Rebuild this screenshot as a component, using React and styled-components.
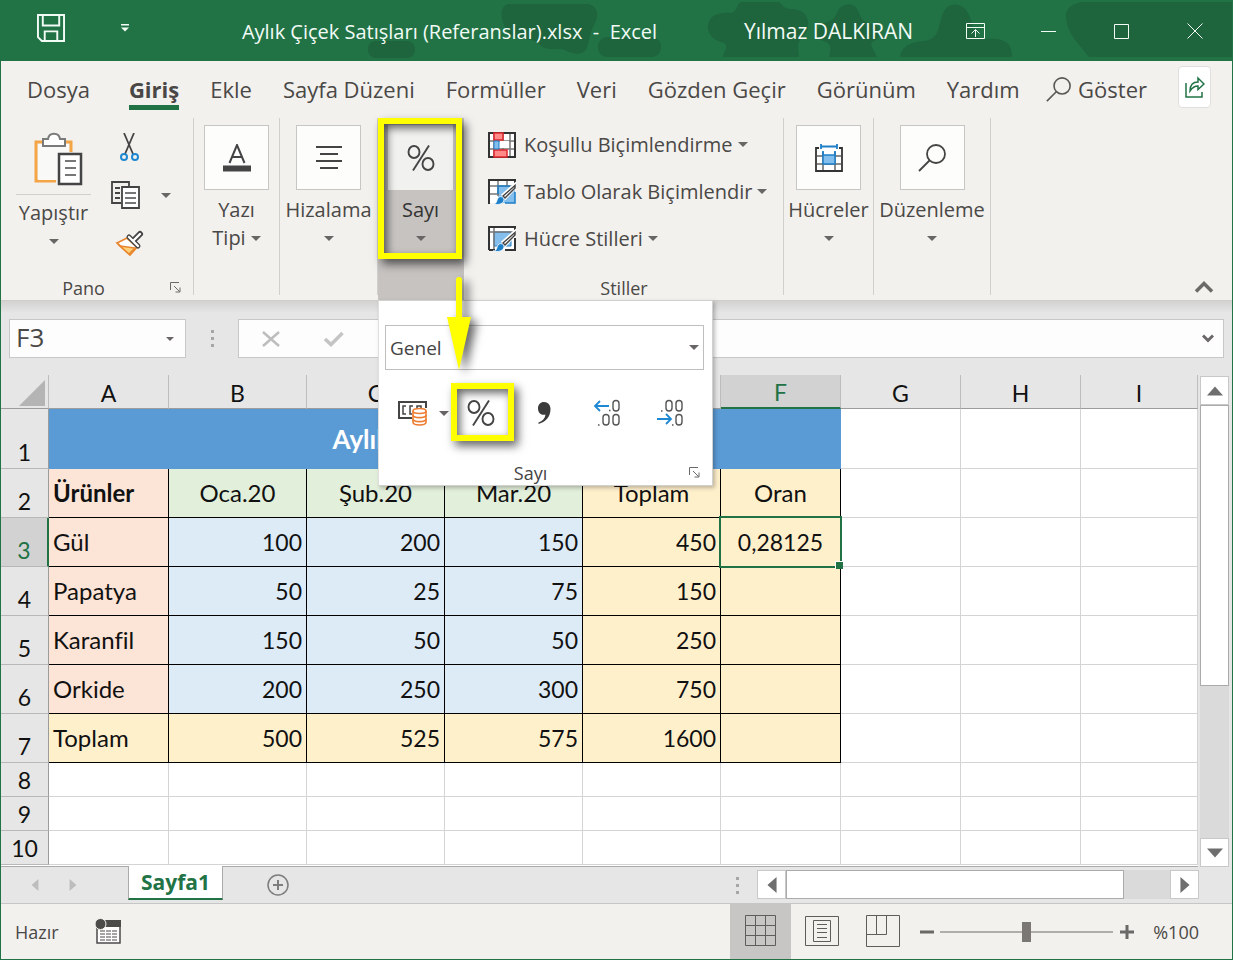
import React from 'react';
import styled, { createGlobalStyle, css } from 'styled-components';

const GREEN = '#217346';
const INK = '#444444';

const GlobalStyle = createGlobalStyle`
  *, *::before, *::after {
    box-sizing: border-box;
  }
  body {
    margin: 0;
    font-family: 'Open Sans', 'Noto Sans', sans-serif;
    font-size: 20px;
    color: #4a4846;
  }
  button, input, select {
    font: inherit;
    color: inherit;
    margin: 0;
    padding: 0;
    border: 0;
    background: none;
    border-radius: 0;
    outline: none;
  }
  svg {
    display: block;
    flex: none;
  }
`;

const Window = styled.div`
  min-height: 100vh;
  display: flex;
  flex-direction: column;
  border: 1px solid ${GREEN};
  background: #f3f1ee;
  overflow: hidden;
`;

/* Title bar */

const TitleBar = styled.header`
  position: relative;
  height: 60px;
  display: flex;
  align-items: center;
  padding-right: 1px;
  background: ${GREEN};
  color: #f2fbf5;
`;

const TitleArt = styled.svg`
  position: absolute;
  right: 0;
  top: 0;
`;

const QuickAccess = styled.div`
  position: relative;
  display: flex;
  align-items: center;
  gap: 56px;
  width: 180px;
  padding: 0 0 6px 36px;
`;

const QuickButton = styled.button`
  display: flex;
  color: #f2fbf5;
`;

const DocumentTitle = styled.h1`
  position: relative;
  flex: 1;
  margin: 0;
  font-size: 20px;
  font-weight: 400;
  text-align: center;
  white-space: pre;
`;

const UserName = styled.button`
  position: relative;
  padding: 0 26px;
  font-size: 21px;
  white-space: nowrap;
`;

const WindowButton = styled.button`
  position: relative;
  width: 73px;
  height: 60px;
  display: flex;
  align-items: center;
  justify-content: center;
`;

/* Ribbon tabs */

const TabStrip = styled.div`
  height: 57px;
  display: flex;
  align-items: flex-start;
  justify-content: space-between;
  padding: 0 21px 0 26px;
`;

const Tabs = styled.nav`
  display: flex;
  gap: 31px;
`;

const TabTools = styled.div`
  display: flex;
  gap: 31px;
`;

const RibbonTab = styled.button`
  height: 49px;
  padding-top: 12px;
  font-size: 22px;
  line-height: 32px;
  white-space: nowrap;
  margin-right: ${(props) => (props.$file ? '8px' : '0')};
  border-bottom: 5px solid ${(props) => (props.$active ? GREEN : 'transparent')};
  font-weight: ${(props) => (props.$active ? 700 : 400)};
`;

const TellMe = styled(RibbonTab)`
  display: flex;
  align-items: center;
  gap: 7px;
`;

const ShareButton = styled.button`
  width: 33px;
  height: 42px;
  margin-top: 5px;
  display: flex;
  align-items: center;
  justify-content: center;
  border: 1px solid #e1dfdd;
  border-radius: 4px;
  background: #fff;
`;

/* Ribbon body */

const Ribbon = styled.section`
  position: relative;
  z-index: 2;
  height: 183px;
  display: flex;
  border-bottom: 1px solid #cfccc9;
`;

const Group = styled.div`
  position: relative;
  width: ${(props) => props.$width}px;
  display: flex;
  flex-direction: column;

  &::after {
    content: '';
    position: absolute;
    right: 0;
    top: 0;
    bottom: 5px;
    width: ${(props) => (props.$open ? 0 : 1)}px;
    background: #d2d0ce;
  }

  ${(props) =>
    props.$open &&
    css`
      background: #c6c3c1;
      color: #333;
    `}
`;

const GroupBody = styled.div`
  flex: 1;
  display: flex;
`;

const GroupFooter = styled.div`
  display: grid;
  grid-template-columns: ${(props) => (props.$launcher ? '1fr 28px' : '1fr')};
  align-items: center;
  height: 25px;
  font-size: 18px;
  text-align: center;
`;

const LauncherButton = styled.button`
  justify-self: ${(props) => (props.$end ? 'end' : 'start')};
  padding: 0 4px;
`;

const PasteButton = styled.button`
  width: 75px;
  margin-left: 15px;
  padding-top: 14px;
  display: flex;
  flex-direction: column;
  align-items: center;
  white-space: nowrap;
`;

const PasteIcon = styled.span`
  width: 75px;
  height: 63px;
  display: flex;
  justify-content: center;
  padding-left: 10px;
  border-bottom: 1px solid #d2d0ce;
`;

const CaretLine = styled.span`
  height: 28px;
  display: flex;
  align-items: center;
  justify-content: center;
`;

const ButtonText = styled.span`
  line-height: 28px;
  margin-top: ${(props) => (props.$flush ? 4 : 6)}px;
`;

const SmallButtons = styled.div`
  display: flex;
  flex-direction: column;
  padding: 5px 0 0 20px;
`;

const SmallButton = styled.button`
  width: 66px;
  height: 48px;
  display: flex;
  align-items: center;
  gap: 21px;
`;

const LargeButton = styled.button`
  flex: 1;
  min-width: 0;
  padding: 7px 1px 0 0;
  display: flex;
  flex-direction: column;
  align-items: center;
  white-space: nowrap;
`;

const Tile = styled.span`
  width: 65px;
  height: 65px;
  display: flex;
  align-items: center;
  justify-content: center;
  border: 1px solid ${(props) => (props.$plain ? '#f1f2ef' : '#c8c6c4')};
  background: ${(props) => (props.$plain ? '#f1f2ef' : '#fdfefb')};
`;

const StyleList = styled.div`
  padding: 3px 0 0 24px;
`;

const StyleButton = styled.button`
  height: 47px;
  display: flex;
  align-items: center;
  gap: 8px;
  white-space: nowrap;
`;

const LabelWithCaret = styled.span`
  display: flex;
  align-items: center;
  gap: 5px;
  line-height: 28px;
`;

const CollapseButton = styled.button`
  margin: auto 18px 6px auto;
`;

/* Number drop-down and the yellow marks that lie over it */

const NumberPanel = styled.div`
  position: absolute;
  left: 0;
  top: 182px;
  width: 335px;
  height: 186px;
  padding: 24px 8px 0 6px;
  display: flex;
  flex-direction: column;
  background: #fff;
  border: 1px solid #d2d0ce;
  border-left-color: #e1dfdd;
  box-shadow: 2px 2px 4px rgba(0, 0, 0, 0.25);
  color: #444;
`;

const FormatBox = styled.label`
  position: relative;
  display: flex;
  align-items: center;
`;

const FormatSelect = styled.select`
  appearance: none;
  width: 100%;
  height: 45px;
  padding: 0 4px;
  font-size: 19px;
  border: 1px solid #c1bfbd;
`;

const FormatCaret = styled.span`
  position: absolute;
  right: 5px;
  pointer-events: none;
`;

const NumberButtons = styled.div`
  display: flex;
  margin-top: 13px;
`;

const NumberButton = styled.button`
  position: relative;
  width: 63px;
  height: 58px;
  padding: 2px 3px 0 0;
  display: flex;
  align-items: center;
  justify-content: center;
`;

const CurrencyButton = styled(NumberButton)`
  width: 66px;
  padding: 2px 2px 0 12px;
  gap: 12px;
`;

const PanelFooter = styled(GroupFooter)`
  margin-top: auto;
`;

const mark = css`
  position: absolute;
  border: 6px solid #ffff00;
  box-shadow: 4px 5px 9px rgba(0, 0, 0, 0.6), inset 3px 4px 9px rgba(0, 0, 0, 0.6);
  pointer-events: none;
`;

const GroupMark = styled.span`
  ${mark}
  left: 0;
  top: 0;
  width: 84px;
  height: 141px;
`;

const ButtonMark = styled.span`
  ${mark}
  inset: 0;
`;

const ArrowMark = styled.svg`
  position: absolute;
  left: 69px;
  top: 159px;
  overflow: visible;
  pointer-events: none;
  filter: drop-shadow(6px 4px 5px rgba(0, 0, 0, 0.6));
`;

/* Formula bar */

const FormulaBar = styled.div`
  height: 74px;
  display: flex;
  padding: 18px 8px 0;
  background: linear-gradient(#d3d2d1, #e6e6e6 12px);
`;

const NameBox = styled.div`
  width: 177px;
  height: 39px;
  display: flex;
  align-items: center;
  background: #fdfdfd;
  border: 1px solid #c8c8c8;
`;

const NameInput = styled.input`
  flex: 1;
  min-width: 0;
  height: 36px;
  padding: 0 0 3px 6px;
  font-size: 26px;
`;

const NameButton = styled.button`
  width: 30px;
  height: 36px;
  display: flex;
  align-items: center;
  justify-content: center;
`;

const Grip = styled.span`
  width: 52px;
  height: 39px;
  display: flex;
  flex-direction: column;
  align-items: center;
  justify-content: center;
  gap: 4px;

  i {
    width: 3px;
    height: 3px;
    background: #a6a6a6;
  }
`;

const FormulaBox = styled.div`
  flex: 1;
  height: 39px;
  display: flex;
  align-items: center;
  background: #fdfdfd;
  border: 1px solid #c8c8c8;
`;

const FormulaButton = styled.button`
  width: ${(props) => (props.$narrow ? 30 : 63)}px;
  height: 36px;
  display: flex;
  align-items: center;
  justify-content: center;
`;

const FormulaInput = styled.input`
  flex: 1;
  min-width: 0;
`;

/* Sheet */

const SheetArea = styled.main`
  flex: 1;
  display: flex;
  background: #e6e6e6;
`;

const SheetPane = styled.div`
  flex: 1;
  min-width: 0;
  border-bottom: 1px solid #ababab;
  background: linear-gradient(#e6e6e6 34px, #fff 34px);
`;

const Sheet = styled.table`
  width: 100%;
  table-layout: fixed;
  border-collapse: separate;
  border-spacing: 0;
  font-family: Lato, Carlito, sans-serif;
  font-size: 23px;
  font-variant-ligatures: none;
  color: #111;
`;

const ColumnHead = styled.th`
  height: 34px;
  padding: 2px 0 0;
  font-weight: 400;
  line-height: 30px;
  border-right: 1px solid #bdbdbd;
  border-bottom: 1px solid #9c9c9c;
  background: #e6e6e6;

  ${(props) =>
    props.$active &&
    css`
      color: ${GREEN};
      background: #d2d2d2;
      border-bottom: 2px solid ${GREEN};
    `}
`;

const CornerIcon = styled.svg`
  margin: 0 3px 0 auto;
`;

const RowHead = styled.th`
  height: ${(props) => props.$height}px;
  padding: 0 0 1px;
  font-weight: 400;
  line-height: 30px;
  vertical-align: bottom;
  border-right: 1px solid #9c9c9c;
  border-bottom: 1px solid #b8b8b8;
  background: #e6e6e6;

  ${(props) =>
    props.$active &&
    css`
      color: ${GREEN};
      background: #d2d2d2;
      border-right: 2px solid ${GREEN};
    `}
`;

const Cell = styled.td`
  padding: 0 4px;
  line-height: 30px;
  font-size: ${(props) => (props.$text ? 24 : 23)}px;
  text-align: ${(props) => props.$align || 'right'};
  font-weight: ${(props) => (props.$bold ? 700 : 400)};
  background: ${(props) => props.$fill || '#fff'};
  border-right: 1px solid ${(props) => (props.$fill ? '#000' : '#d4d4d4')};
  border-bottom: 1px solid ${(props) => (props.$fill ? '#000' : '#d4d4d4')};

  ${(props) =>
    props.$selected &&
    css`
      position: relative;
      z-index: 1;
    `}
`;

const BannerCell = styled.td`
  padding: 0;
  font-size: 26px;
  font-weight: 700;
  line-height: 30px;
  text-align: center;
  color: #fff;
  background: #5b9bd5;
  border-bottom: 1px solid #5b9bd5;
`;

const Selection = styled.span`
  position: absolute;
  inset: -2px;
  border: 2px solid ${GREEN};

  &::after {
    content: '';
    position: absolute;
    right: -3px;
    bottom: -3px;
    width: 8px;
    height: 8px;
    background: ${GREEN};
    border: 1px solid #fff;
    border-width: 1px 0 0 1px;
  }
`;

const VerticalScroll = styled.div`
  width: 34px;
  padding: 1px 3px 0 2px;
  display: flex;
  flex-direction: column;
`;

const ScrollButton = styled.button`
  width: 29px;
  height: 29px;
  flex: none;
  display: flex;
  align-items: center;
  justify-content: center;
  background: #fff;
  border: 1px solid #c8c8c8;
`;

const VerticalTrack = styled.div`
  flex: 1;
  background: #dadada;
`;

const VerticalThumb = styled.div`
  height: 65%;
  background: #fff;
  border: 1px solid #ababab;
`;

/* Sheet tabs */

const SheetBar = styled.div`
  height: 37px;
  display: flex;
  background: #e6e6e6;
  border-bottom: 1px solid #c6c6c6;
  padding-right: 33px;
`;

const SheetNav = styled.div`
  width: 127px;
  display: flex;
  align-items: center;
  gap: 26px;
  padding-left: 28px;
`;

const SheetTab = styled.button`
  width: 95px;
  height: 34px;
  margin-top: -1px;
  position: relative;
  font-size: 21px;
  font-weight: 700;
  line-height: 30px;
  color: ${GREEN};
  background: #fff;
  border: 1px solid #ababab;
  border-top: 0;
  border-bottom: 2px solid ${GREEN};
`;

const AddSheet = styled.button`
  margin: 0 auto 0 44px;
  display: flex;
  align-items: center;
`;

const BarGrip = styled(Grip)`
  width: 40px;
  height: 36px;
`;

const HorizontalScroll = styled.div`
  flex: 0 0 442px;
  height: 29px;
  margin-top: 3px;
  display: flex;
`;

const HorizontalTrack = styled.div`
  flex: 1;
  background: #dadada;
`;

const HorizontalThumb = styled.div`
  width: 88%;
  height: 29px;
  background: #fff;
  border: 1px solid #ababab;
`;

/* Status bar */

const StatusBar = styled.footer`
  height: 55px;
  display: flex;
  align-items: center;
  padding: 0 33px 0 14px;
  font-size: 18px;
`;

const MacroButton = styled.button`
  margin: 0 auto 0 36px;
`;

const ViewButton = styled.button`
  width: 61px;
  height: 55px;
  padding-bottom: 2px;
  display: flex;
  align-items: center;
  justify-content: center;
  background: ${(props) => (props.$active ? '#c8c6c4' : 'transparent')};
`;

const ZoomButton = styled.button`
  width: 27px;
  display: flex;
  justify-content: center;
`;

const ZoomSlider = styled.input`
  appearance: none;
  width: 173px;
  height: 20px;
  background: linear-gradient(#b0aeac, #b0aeac) center / 100% 2px no-repeat;

  &::-webkit-slider-thumb {
    appearance: none;
    width: 9px;
    height: 20px;
    background: #7a7775;
  }
`;

const ZoomValue = styled.button`
  width: 59px;
  text-align: right;
`;

function Caret({ small }) {
  return (
    <svg width={small ? 8 : 10} height={small ? 4 : 5} viewBox="0 0 10 5">
      <path d="M0 0h10L5 5z" fill="#686664" />
    </svg>
  );
}

function Triangle({ dir, size = 16, color = '#6e6e6e' }) {
  const turn = { up: 0, right: 90, down: 180, left: 270 }[dir];
  return (
    <svg width={size} height={size} viewBox="0 0 14 14">
      <path d="M0 11L7 3l7 8z" fill={color} transform={`rotate(${turn} 7 7)`} />
    </svg>
  );
}

function Launcher() {
  return (
    <svg width="11" height="11" viewBox="0 0 11 11" fill="none" stroke="#6b6967">
      <path d="M.5 8V.5H9M4 4l5.500 5.500M10 5.500v4.500H5.500" />
    </svg>
  );
}

function Magnifier({ size = 25, color = INK }) {
  return (
    <svg width={size} height={size} viewBox="0 0 28 28" fill="none" stroke={color} strokeWidth="1.800">
      <circle cx="18" cy="10" r="9" />
      <path d="M11.500 16.500L1 27" />
    </svg>
  );
}

function Percent() {
  return (
    <svg width="28" height="28" viewBox="0 0 28 28" fill="none" stroke={INK} strokeWidth="1.900">
      <ellipse cx="7" cy="8" rx="5.500" ry="6" />
      <ellipse cx="21" cy="20" rx="5.500" ry="6" />
      <path d="M22 1.500L6 26.500" />
    </svg>
  );
}

function TableIcon({ kind }) {
  return (
    <svg width="28" height="28" viewBox="0 0 28 28" fill="none">
      <path d="M1 2h26v23H1z" fill="#fff" />
      {kind === 'cells' ? (
        <>
          <path d="M6 7h17v14H6z" fill="#83beec" stroke="#1e7fc9" />
          <path d="M6 2v23M1 7h26" stroke="#777" strokeWidth="1.500" />
          <path d="M1 25V2h26v5M1 25h6M17 25h10V13" stroke="#333" strokeWidth="2" />
        </>
      ) : (
        <>
          <path d="M10 8h17v17H10z" fill="#83beec" />
          <path d="M10 2v16M19 2v6M1 8h26M1 16h10" stroke="#777" strokeWidth="1.500" />
          <path d="M10 16V8h12M17 25h10V14" stroke="#1e7fc9" strokeWidth="1.500" />
          <path d="M1 26V2h26v5" stroke="#333" strokeWidth="2" />
        </>
      )}
      <path d="M27.500 6L15 17l2.500 3L27.500 9z" fill="#fff" stroke="#fff" strokeWidth="3" />
      <path d="M27 7.500L15 18l2 2L27 10z" fill="#fff" stroke="#444" strokeWidth="1.500" />
      <path d="M5 26c5 0 3-5 6-7 2-1 5 0 5 2.500 0 4-5 6-11 4.500z" fill="#1e7fc9" stroke="#fff" strokeWidth=".800" />
    </svg>
  );
}

function ConditionalIcon() {
  return (
    <svg width="28" height="26" viewBox="0 0 28 26" fill="none">
      <path d="M1 1h26v24H1z" fill="#fff" />
      <path d="M1 9h26M1 17h26M6 1v24M15 1v24M22 1v24" stroke="#777" strokeWidth="1.500" />
      <path d="M1 1h26v24H1z" stroke="#333" strokeWidth="2" />
      <path d="M6 1h9v7H6zM6 18h13v7H6z" fill="#ff8a8a" stroke="#e0282e" strokeWidth="1.500" />
      <path d="M6 9h5v8H6z" fill="#83beec" stroke="#1e7fc9" />
      <path d="M12 9h9v7h-9z" fill="#fff" />
    </svg>
  );
}

const tabs = ['Dosya', 'Giriş', 'Ekle', 'Sayfa Düzeni', 'Formüller', 'Veri', 'Gözden Geçir', 'Görünüm', 'Yardım'];

const columns = [
  { name: 'A', width: 120 },
  { name: 'B', width: 138 },
  { name: 'C', width: 138 },
  { name: 'D', width: 138 },
  { name: 'E', width: 138 },
  { name: 'F', width: 120 },
  { name: 'G', width: 120 },
  { name: 'H', width: 120 },
  { name: 'I' },
];

const rows = [
  ['Ürünler', 'Oca.20', 'Şub.20', 'Mar.20', 'Toplam', 'Oran'],
  ['Gül', '100', '200', '150', '450', '0,28125'],
  ['Papatya', '50', '25', '75', '150', ''],
  ['Karanfil', '150', '50', '50', '250', ''],
  ['Orkide', '200', '250', '300', '750', ''],
  ['Toplam', '500', '525', '575', '1600', ''],
];

const SAND = '#fff0cc';

function fillFor(row, col) {
  if (row === 5 || col > 3) return SAND;
  if (col === 0) return '#fce4d6';
  return row === 0 ? '#e2efda' : '#ddebf7';
}

function alignFor(row, col) {
  if (col === 0) return 'left';
  return row === 0 || col === 5 ? 'center' : 'right';
}

function TitleBarView() {
  return (
    <TitleBar>
      <TitleArt width="900" height="60" viewBox="332 0 900 60" fill="#1e643d">
        <rect x="368" y="40" width="47" height="17" rx="8" />
        <path d="M508 3h80c10 2 11 12 7 19-5 8-5 15-8 25-4 8-14 6-20 3-8-5-20 2-28-7-9-9-24-1-31-12-7-10-10-25 0-28z" />
        <rect x="598" y="36" width="63" height="20" rx="9" />
        <path d="M741 1h38c5 4 5 7 11 7 16 0 19 10 18 18-1 10-11 12-10 20l1 10h-76c1-7 6-10 1-14-8-2-16-7-16-16 0-12 12-15 22-14 7 0 6-8 11-11z" />
        <path d="M829 56c2-8 3-14-6-16-9-3-8-14 1-18 9-3 10-4 13-10 4-11 18-12 22 0 3 8 6 10 14 11 9 2 9 13 1 17-6 3-1 7 3 16z" />
        <path d="M900 56c2-12 12-15 24-16 15-2 14-13 18-25 4-15 21-15 27-1 6 13 3 24 17 24 18-1 26 3 26 18z" />
        <path d="M1086 1h146v55h-143c-9-12-22-23-23-40-1-9 8-15 20-15z" />
      </TitleArt>
      <QuickAccess>
        <QuickButton aria-label="Kaydet">
          <svg width="28" height="28" viewBox="0 0 29 29" fill="none" stroke="currentColor" strokeWidth="2">
            <path d="M1 1h27v27H5l-4-4zM6 1v11h17V1M8 28V18h13v10" />
          </svg>
        </QuickButton>
        <QuickButton aria-label="Hızlı Erişim">
          <svg width="8" height="8" viewBox="0 0 8 8" fill="currentColor">
            <path d="M0 0h8v1.500H0zM0 3.500h8L4 7.500z" />
          </svg>
        </QuickButton>
      </QuickAccess>
      <DocumentTitle>{'Aylık Çiçek Satışları (Referanslar).xlsx  -  Excel'}</DocumentTitle>
      <UserName>Yılmaz DALKIRAN</UserName>
      <WindowButton aria-label="Şerit seçenekleri">
        <svg width="19" height="16" viewBox="0 0 19 16" fill="none" stroke="currentColor">
          <path d="M.5.5h18v15H.5zM.5 4.500h18M9.500 14V7M5.500 10.500l4-4 4 4" />
        </svg>
      </WindowButton>
      <WindowButton aria-label="Simge durumu">
        <svg width="15" height="15" viewBox="0 0 15 15" stroke="currentColor">
          <path d="M0 7.500h15" />
        </svg>
      </WindowButton>
      <WindowButton aria-label="Ekranı kapla">
        <svg width="15" height="15" viewBox="0 0 15 15" fill="none" stroke="currentColor">
          <path d="M.5.5h14v14H.5z" />
        </svg>
      </WindowButton>
      <WindowButton aria-label="Kapat">
        <svg width="16" height="16" viewBox="0 0 16 16" stroke="currentColor">
          <path d="M.5.5l15 15M15.500.5l-15 15" />
        </svg>
      </WindowButton>
    </TitleBar>
  );
}

function NumberDropdown() {
  return (
    <NumberPanel>
      <FormatBox>
        <FormatSelect aria-label="Sayı Biçimi" defaultValue="Genel">
          <option>Genel</option>
        </FormatSelect>
        <FormatCaret>
          <Caret />
        </FormatCaret>
      </FormatBox>
      <NumberButtons>
        <CurrencyButton aria-label="Finansal Sayı Biçimi">
          <svg width="29" height="26" viewBox="0 0 29 26" fill="none" stroke={INK} strokeWidth="2">
            <path d="M14 18H1V2h27v6" />
            <path d="M8 6H5v8h3M15 6h-3v8h2M19 8V6h4v2" strokeWidth="1.500" />
            <path d="M15 11v11c0 2 3 3 6.500 3s6.500-1 6.500-3V11" fill="#fff" stroke="#ed7d31" strokeWidth="1.600" />
            <ellipse cx="21.500" cy="11" rx="6.500" ry="2.500" fill="#fff" stroke="#ed7d31" strokeWidth="1.600" />
            <path d="M15 15c0 3.500 13 3.500 13 0M15 19c0 3.500 13 3.500 13 0" stroke="#ed7d31" strokeWidth="1.600" />
          </svg>
          <Caret />
        </CurrencyButton>
        <NumberButton aria-label="Yüzde Stili">
          <Percent />
          <ButtonMark />
        </NumberButton>
        <NumberButton aria-label="Virgül Stili">
          <svg width="14" height="24" viewBox="0 0 14 24" fill="#3b3b3b">
            <path d="M7 1c4 0 6.500 3 6.500 7 0 8-5 13-12 15v-1.500c4-1.500 6.500-4 7-8C4 15 1 11.500 1 7.500 1 3.500 3.500 1 7 1z" />
          </svg>
        </NumberButton>
        <NumberButton aria-label="Ondalık Artır">
          <svg width="28" height="28" viewBox="0 0 28 28" fill="none" stroke="#555" strokeWidth="1.400">
            <path d="M16 7H2M7 2L2 7l5 5" stroke="#1e88d2" strokeWidth="1.800" />
            <rect x="20" y="1.500" width="6" height="10.500" rx="3" />
            <rect x="10" y="15.500" width="6" height="10.500" rx="3" />
            <rect x="20" y="15.500" width="6" height="10.500" rx="3" />
            <path d="M16 11.500h1.500M5 26h1.500" />
          </svg>
        </NumberButton>
        <NumberButton aria-label="Ondalık Azalt">
          <svg width="28" height="28" viewBox="0 0 28 28" fill="none" stroke="#555" strokeWidth="1.400">
            <path d="M1 20h14M10 15l5 5-5 5" stroke="#1e88d2" strokeWidth="1.800" />
            <rect x="10" y="1.500" width="6" height="10.500" rx="3" />
            <rect x="20" y="1.500" width="6" height="10.500" rx="3" />
            <rect x="20" y="15.500" width="6" height="10.500" rx="3" />
            <path d="M5 12h1.500M16 26h1.500" />
          </svg>
        </NumberButton>
      </NumberButtons>
      <PanelFooter $launcher>
        <span>Sayı</span>
        <LauncherButton $end aria-label="Sayı ayarları">
          <Launcher />
        </LauncherButton>
      </PanelFooter>
    </NumberPanel>
  );
}

function RibbonView() {
  return (
    <Ribbon>
      <Group $width={193}>
        <GroupBody>
          <PasteButton>
            <PasteIcon>
              <svg width="49" height="54" viewBox="0 0 49 54" fill="none" strokeWidth="2">
                <path d="M22 49H2V10h35v10" stroke="#f4a546" strokeWidth="3" />
                <path d="M4 12h31v36H4z" fill="#f9f9f8" />
                <path d="M9 14V7h5c1-7 11-7 12 0h5v7z" fill="#fff" stroke="#7a7a7a" />
                <path d="M25 22h22v30H25z" fill="#fff" stroke={INK} strokeWidth="2.500" />
                <path d="M31 29h11M31 36h11M31 43h11" stroke="#777" />
              </svg>
            </PasteIcon>
            <ButtonText $flush>Yapıştır</ButtonText>
            <CaretLine>
              <Caret />
            </CaretLine>
          </PasteButton>
          <SmallButtons>
            <SmallButton aria-label="Kes">
              <svg width="36" height="28" viewBox="0 0 36 28" fill="none" stroke={INK} strokeWidth="1.800">
                <path d="M13 0l9 21M23 0l-9 21" />
                <circle cx="13" cy="24" r="3" stroke="#1e88d2" strokeWidth="2" />
                <circle cx="24" cy="24" r="3" stroke="#1e88d2" strokeWidth="2" />
              </svg>
            </SmallButton>
            <SmallButton aria-label="Kopyala">
              <svg width="29" height="28" viewBox="0 0 29 28" fill="none" stroke={INK} strokeWidth="1.800">
                <path d="M10 22H1V1h17v4M4 7h5M4 12h5M4 17h5" />
                <path d="M11 6h17v21H11z" fill="#fff" />
                <path d="M14 12h11M14 17h11M14 22h11" stroke="#777" />
              </svg>
              <Caret />
            </SmallButton>
            <SmallButton aria-label="Biçim Boyacısı">
              <svg width="34" height="28" viewBox="0 0 34 28" fill="none">
                <path d="M6 14l10-5 10 9-7 8z" fill="#fff" stroke="#e8872e" strokeWidth="1.800" />
                <path d="M9 17l15 2-6 6z" fill="#ffd27a" stroke="#e8872e" strokeWidth="1.500" />
                <path d="M29 5l-6 6" stroke={INK} strokeWidth="6" strokeLinecap="round" />
                <path d="M18 8l9 9" stroke={INK} strokeWidth="5" strokeLinecap="round" />
                <path d="M29 5l-6 6M18 8l9 9" stroke="#fff" strokeWidth="2.400" strokeLinecap="round" />
              </svg>
            </SmallButton>
          </SmallButtons>
        </GroupBody>
        <GroupFooter $launcher>
          <span>Pano</span>
          <LauncherButton aria-label="Pano ayarları">
            <Launcher />
          </LauncherButton>
        </GroupFooter>
      </Group>

      <Group $width={86}>
        <LargeButton>
          <Tile>
            <svg width="28" height="28" viewBox="0 0 28 28" fill="none" stroke={INK} strokeWidth="2">
              <path d="M6.500 19L14 1l7.500 18M9 13h10" />
              <path d="M0 24.500h28" strokeWidth="6" />
            </svg>
          </Tile>
          <ButtonText>Yazı</ButtonText>
          <LabelWithCaret>
            Tipi <Caret />
          </LabelWithCaret>
        </LargeButton>
      </Group>

      <Group $width={98}>
        <LargeButton>
          <Tile>
            <svg width="26" height="24" viewBox="0 0 26 24" stroke={INK} strokeWidth="2">
              <path d="M0 1h26M4 8h18M0 15h26M4 22h18" />
            </svg>
          </Tile>
          <ButtonText>Hizalama</ButtonText>
          <CaretLine>
            <Caret />
          </CaretLine>
        </LargeButton>
      </Group>

      <Group $width={86} $open>
        <LargeButton>
          <Tile $plain>
            <Percent />
          </Tile>
          <ButtonText>Sayı</ButtonText>
          <CaretLine>
            <Caret />
          </CaretLine>
        </LargeButton>
        <GroupMark />
        <NumberDropdown />
        <ArrowMark width="24" height="94" viewBox="0 0 24 94" fill="#ffff00">
          <path d="M9 3a3 3 0 0 1 6 0v37h9L12 93 0 40h9z" />
        </ArrowMark>
      </Group>

      <Group $width={320}>
        <GroupBody>
          <StyleList>
            <StyleButton>
              <ConditionalIcon />
              <LabelWithCaret>
                Koşullu Biçimlendirme <Caret />
              </LabelWithCaret>
            </StyleButton>
            <StyleButton>
              <TableIcon kind="table" />
              <LabelWithCaret>
                Tablo Olarak Biçimlendir <Caret />
              </LabelWithCaret>
            </StyleButton>
            <StyleButton>
              <TableIcon kind="cells" />
              <LabelWithCaret>
                Hücre Stilleri <Caret />
              </LabelWithCaret>
            </StyleButton>
          </StyleList>
        </GroupBody>
        <GroupFooter>
          <span>Stiller</span>
        </GroupFooter>
      </Group>

      <Group $width={90}>
        <LargeButton>
          <Tile>
            <svg width="28" height="28" viewBox="0 0 28 28" fill="none">
              <path d="M2 5h24v22H2z" fill="#fff" />
              <path d="M2 12h24M2 20h24M8 8v19M20 8v19" stroke="#666" strokeWidth="1.500" />
              <path d="M8 11h12v9H8z" fill="#83beec" stroke="#1e7fc9" strokeWidth="1.500" />
              <path d="M8 7v4M20 7v4M6 2.500h16M6 0v5M22 0v5" stroke="#1e7fc9" strokeWidth="1.800" />
              <path d="M4 4H1v23h26V4h-3" stroke="#333" strokeWidth="1.800" />
            </svg>
          </Tile>
          <ButtonText>Hücreler</ButtonText>
          <CaretLine>
            <Caret />
          </CaretLine>
        </LargeButton>
      </Group>

      <Group $width={117}>
        <LargeButton>
          <Tile>
            <Magnifier size={28} />
          </Tile>
          <ButtonText>Düzenleme</ButtonText>
          <CaretLine>
            <Caret />
          </CaretLine>
        </LargeButton>
      </Group>

      <CollapseButton aria-label="Şeridi daralt">
        <svg width="20" height="14" viewBox="0 0 20 14" fill="none" stroke="#6b6967" strokeWidth="3.500">
          <path d="M2 11.500l8-8 8 8" />
        </svg>
      </CollapseButton>
    </Ribbon>
  );
}

function SheetView() {
  return (
    <SheetArea>
      <SheetPane>
        <Sheet>
          <colgroup>
            <col width="48" />
            {columns.map((column) => (
              <col key={column.name} width={column.width} />
            ))}
          </colgroup>
          <thead>
            <tr>
              <ColumnHead>
                <CornerIcon width="26" height="26" viewBox="0 0 26 26">
                  <path d="M26 0v26H0z" fill="#b4b4b4" />
                </CornerIcon>
              </ColumnHead>
              {columns.map((column) => (
                <ColumnHead key={column.name} scope="col" $active={column.name === 'F'}>
                  {column.name}
                </ColumnHead>
              ))}
            </tr>
          </thead>
          <tbody>
            <tr>
              <RowHead scope="row" $height={60}>
                1
              </RowHead>
              <BannerCell colSpan={6}>Aylık Çiçek Satışları</BannerCell>
              <Cell />
              <Cell />
              <Cell />
            </tr>
            {rows.map((row, r) => (
              <tr key={row[0] + r}>
                <RowHead scope="row" $height={49} $active={r === 1}>
                  {r + 2}
                </RowHead>
                {row.map((value, c) => (
                  <Cell
                    key={c}
                    $fill={fillFor(r, c)}
                    $align={alignFor(r, c)}
                    $text={r === 0 || c === 0}
                    $bold={r === 0 && c === 0}
                    $selected={r === 1 && c === 5}
                  >
                    {value}
                    {r === 1 && c === 5 && <Selection />}
                  </Cell>
                ))}
                <Cell />
                <Cell />
                <Cell />
              </tr>
            ))}
            {[8, 9, 10].map((number) => (
              <tr key={number}>
                <RowHead scope="row" $height={34}>
                  {number}
                </RowHead>
                {columns.map((column) => (
                  <Cell key={column.name} />
                ))}
              </tr>
            ))}
          </tbody>
        </Sheet>
      </SheetPane>
      <VerticalScroll>
        <ScrollButton aria-label="Yukarı">
          <Triangle dir="up" />
        </ScrollButton>
        <VerticalTrack>
          <VerticalThumb />
        </VerticalTrack>
        <ScrollButton aria-label="Aşağı">
          <Triangle dir="down" />
        </ScrollButton>
      </VerticalScroll>
    </SheetArea>
  );
}

export default function App() {
  return (
    <Window>
      <GlobalStyle />
      <TitleBarView />
      <TabStrip>
        <Tabs>
          {tabs.map((tab, i) => (
            <RibbonTab key={tab} $file={i === 0} $active={i === 1}>
              {tab}
            </RibbonTab>
          ))}
        </Tabs>
        <TabTools>
          <TellMe>
            <Magnifier color="#5a5856" />
            Göster
          </TellMe>
          <ShareButton aria-label="Paylaş">
            <svg width="20" height="22" viewBox="0 0 20 22" fill="none" stroke={GREEN} strokeWidth="1.500">
              <path d="M1 7v14h16v-5" />
              <path d="M5 15c0-6 3-9 8-9V2l6 6-6 5.500V10c-4 0-6 2-8 5z" />
            </svg>
          </ShareButton>
        </TabTools>
      </TabStrip>
      <RibbonView />
      <FormulaBar>
        <NameBox>
          <NameInput aria-label="Ad Kutusu" defaultValue="F3" />
          <NameButton aria-label="Adlar">
            <Caret small />
          </NameButton>
        </NameBox>
        <Grip>
          <i />
          <i />
          <i />
        </Grip>
        <FormulaBox>
          <FormulaButton aria-label="İptal">
            <svg width="18" height="16" viewBox="0 0 18 16" stroke="#bdbdbd" strokeWidth="2.500">
              <path d="M1 1l16 14M17 1L1 15" />
            </svg>
          </FormulaButton>
          <FormulaButton aria-label="Gir">
            <svg width="20" height="16" viewBox="0 0 20 16" fill="none" stroke="#c4c4c4" strokeWidth="3.500">
              <path d="M1 8l6 5.500L18.500 2" />
            </svg>
          </FormulaButton>
          <FormulaInput aria-label="Formül" />
          <FormulaButton $narrow aria-label="Genişlet">
            <svg width="12" height="9" viewBox="0 0 12 9" fill="none" stroke="#6b6967" strokeWidth="3">
              <path d="M1 1.500l5 5 5-5" />
            </svg>
          </FormulaButton>
        </FormulaBox>
      </FormulaBar>
      <SheetView />
      <SheetBar>
        <SheetNav>
          <button aria-label="Önceki sayfa">
            <Triangle dir="left" size={12} color="#bdbdbd" />
          </button>
          <button aria-label="Sonraki sayfa">
            <Triangle dir="right" size={12} color="#bdbdbd" />
          </button>
        </SheetNav>
        <SheetTab>Sayfa1</SheetTab>
        <AddSheet aria-label="Yeni sayfa">
          <svg width="22" height="22" viewBox="0 0 22 22" fill="none" stroke="#7d7d7d" strokeWidth="1.500">
            <circle cx="11" cy="11" r="10" />
            <path d="M6 11h10M11 6v10" strokeWidth="2" />
          </svg>
        </AddSheet>
        <BarGrip>
          <i />
          <i />
          <i />
        </BarGrip>
        <HorizontalScroll>
          <ScrollButton aria-label="Sola">
            <Triangle dir="left" />
          </ScrollButton>
          <HorizontalTrack>
            <HorizontalThumb />
          </HorizontalTrack>
          <ScrollButton aria-label="Sağa">
            <Triangle dir="right" />
          </ScrollButton>
        </HorizontalScroll>
      </SheetBar>
      <StatusBar>
        <span>Hazır</span>
        <MacroButton aria-label="Makro kaydet">
          <svg width="27" height="27" viewBox="0 0 27 27" fill="none">
            <path d="M2 3h23v22H2z" fill="#fff" stroke="#4d4b49" strokeWidth="1.500" />
            <path d="M11 2h15v7H8z" fill="#4d4b49" />
            <path d="M5 13h17M5 16h17M5 19h17M5 22h17" stroke="#4d4b49" strokeWidth="1.200" strokeDasharray="5 1" />
            <circle cx="5.500" cy="6" r="5.500" fill="#4d4b49" stroke="#f3f1ee" />
          </svg>
        </MacroButton>
        <ViewButton $active aria-label="Normal">
          <svg width="31" height="31" viewBox="0 0 31 31" fill="none" stroke="#5f5d5b">
            <path d="M.5.5h30v30H.5zM10.500 0v31M20.500 0v31M0 10.500h31M0 20.500h31" />
          </svg>
        </ViewButton>
        <ViewButton aria-label="Sayfa Düzeni">
          <svg width="34" height="30" viewBox="0 0 34 30" fill="none" stroke="#5f5d5b">
            <path d="M.5.5h33v29H.5zM8.500 4.500h17v21h-17zM12 8.500h10M12 12.500h10M12 16.500h10M12 21.500h10" />
          </svg>
        </ViewButton>
        <ViewButton aria-label="Sayfa Sonu Önizleme">
          <svg width="34" height="32" viewBox="0 0 34 32" fill="none" stroke="#5f5d5b">
            <path d="M.5.5h33v31H.5zM.5 19.500h20V.5M10.500.5v19" />
          </svg>
        </ViewButton>
        <ZoomButton aria-label="Uzaklaştır">
          <svg width="14" height="14" viewBox="0 0 14 14" stroke="#6b6967" strokeWidth="3">
            <path d="M0 7h14" />
          </svg>
        </ZoomButton>
        <ZoomSlider type="range" min="0" max="200" defaultValue="100" aria-label="Yakınlaştırma" />
        <ZoomButton aria-label="Yakınlaştır">
          <svg width="14" height="14" viewBox="0 0 14 14" stroke="#6b6967" strokeWidth="3">
            <path d="M0 7h14M7 0v14" />
          </svg>
        </ZoomButton>
        <ZoomValue>%100</ZoomValue>
      </StatusBar>
    </Window>
  );
}
